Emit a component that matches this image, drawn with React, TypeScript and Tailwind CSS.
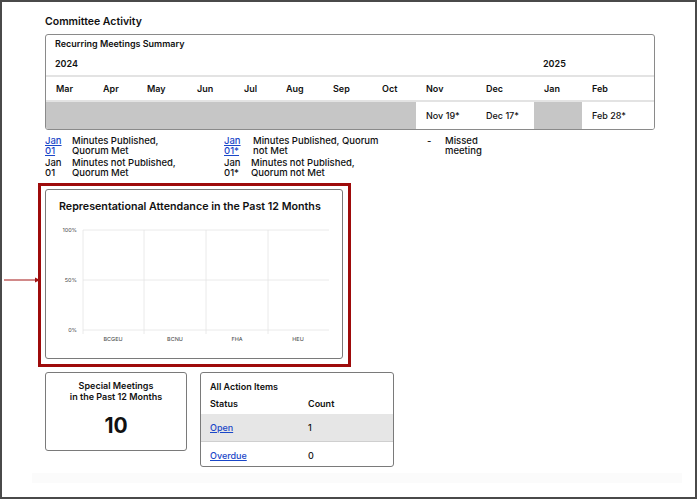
import React from 'react';

const months = [
  { name: 'Mar', cell: null },
  { name: 'Apr', cell: null },
  { name: 'May', cell: null },
  { name: 'Jun', cell: null },
  { name: 'Jul', cell: null },
  { name: 'Aug', cell: null },
  { name: 'Sep', cell: null },
  { name: 'Oct', cell: null },
  { name: 'Nov', cell: 'Nov 19*' },
  { name: 'Dec', cell: 'Dec 17*' },
  { name: 'Jan', cell: null },
  { name: 'Feb', cell: 'Feb 28*' },
];

const cols = 'grid grid-cols-[47px_44px_50px_47px_42px_47px_49px_44px_60px_58px_48px_72px]';

const AttendanceChart = () => {
  const xs = [37, 98, 160, 222];
  const ys = [8, 58, 108];
  const labels = ['100%', '50%', '0%'];
  const cats = [
    { name: 'BCGEU', x: 67 },
    { name: 'BCNU', x: 129 },
    { name: 'FHA', x: 191 },
    { name: 'HEU', x: 252 },
  ];
  return (
    <svg width="296" height="126" className="block" style={{ textRendering: 'geometricPrecision' }}>
      {ys.map((y) => (
        <line key={y} x1={37} x2={283} y1={y} y2={y} stroke="#e4e4e4" strokeWidth="0.8" />
      ))}
      {xs.map((x) => (
        <line key={x} x1={x} x2={x} y1={8} y2={112} stroke="#e4e4e4" strokeWidth="0.8" />
      ))}
      {labels.map((l, i) => (
        <text key={l} x={31} y={ys[i] + 2} textAnchor="end" fontSize="5.5" fill="#444">
          {l}
        </text>
      ))}
      {cats.map((c) => (
        <text key={c.name} x={c.x} y={119} textAnchor="middle" fontSize="5.5" fill="#444">
          {c.name}
        </text>
      ))}
    </svg>
  );
};

export default function App() {
  return (
    <div className="relative w-[697px] h-[499px] border-2 border-[#4a4a4a] bg-white pl-[43px] pt-[13px] font-['Inter','Noto_Sans',sans-serif] text-[#111]">
      {/* annotation arrow */}
      <svg className="absolute left-[1px] top-[274px]" width="38" height="8">
        <line x1="1" y1="4" x2="34" y2="4" stroke="#a31515" strokeWidth="1" />
        <path d="M32 1.5 L37 4 L32 6.5 Z" fill="#a31515" />
      </svg>

      <h2 className="text-[10.5px] font-semibold leading-[14px] mb-[5px]">Committee Activity</h2>

      {/* Recurring meetings */}
      <div className="w-[610px] border border-[#8a8a8a] rounded-[3px] overflow-hidden">
        <div className="h-[20px] pl-[9px] pt-[3px] text-[9px] font-semibold leading-[12px]">
          Recurring Meetings Summary
        </div>
        <div className={`${cols} h-[22px] items-center text-[9px] font-semibold border-b-2 border-[#e3e3e3]`}>
          <div className="col-span-10 pl-[9px] -mt-[2px]">2024</div>
          <div className="col-span-2 pl-[9px] -mt-[2px]">2025</div>
        </div>
        <div className={`${cols} h-[25px] items-center text-[9px] font-semibold border-b-2 border-[#e3e3e3]`}>
          {months.map((m) => (
            <div key={m.name} className="pl-[10px]">
              {m.name}
            </div>
          ))}
        </div>
        <div className={`${cols} h-[27px] text-[9px] font-medium`}>
          {months.map((m) =>
            m.cell ? (
              <div key={m.name} className="pl-[10px] flex items-center bg-white">
                {m.cell}
              </div>
            ) : (
              <div key={m.name} className="bg-[#c6c6c6]" />
            )
          )}
        </div>
      </div>

      {/* Legend */}
      <div className="grid grid-cols-[27px_152px_29px_174px_18px_60px] gap-y-[2px] mt-[6px] text-[9.5px] font-medium leading-[10px]">
        <a href="#" className="text-[#1a47c8] underline">Jan<br />01</a>
        <div>Minutes Published,<br />Quorum Met</div>
        <a href="#" className="text-[#1a47c8] underline">Jan<br />01*</a>
        <div>Minutes Published, Quorum<br />not Met</div>
        <div>-</div>
        <div>Missed<br />meeting</div>
        <div>Jan<br />01</div>
        <div>Minutes not Published,<br />Quorum Met</div>
        <div>Jan<br />01*</div>
        <div className="-ml-[2px]">Minutes not Published,<br />Quorum not Met</div>
        <div />
        <div />
      </div>

      {/* Highlighted chart */}
      <div className="-ml-[7px] mt-[5px] w-[313px] h-[184px] border-[3px] border-[#9e0b0b] pt-[3px] pl-[4px]">
        <div className="w-[298px] h-[170px] border border-[#7a7a7a] rounded-[3px]">
          <div className="h-[32px] pl-[13px] pt-[10px] text-[10.7px] font-semibold leading-[13px]">
            Representational Attendance in the Past 12 Months
          </div>
          <AttendanceChart />
        </div>
      </div>

      {/* Bottom cards */}
      <div className="flex items-start gap-[13px] mt-[5px]">
        <div className="w-[142px] h-[79px] border border-[#7a7a7a] rounded-[3px] flex flex-col items-center pt-[7px]">
          <div className="text-[9px] font-semibold leading-[11px] text-center">
            Special Meetings<br />in the Past 12 Months
          </div>
          <div className="text-[21px] font-bold leading-[24px] mt-[12px]">10</div>
        </div>
        <div className="w-[194px] h-[95px] border border-[#7a7a7a] rounded-[3px] overflow-hidden text-[9px]">
          <div className="pl-[9px] pt-[8px] font-semibold leading-[12px]">All Action Items</div>
          <div className="grid grid-cols-[98px_1fr] pl-[9px] h-[21px] items-center font-semibold">
            <div>Status</div>
            <div>Count</div>
          </div>
          <div className="grid grid-cols-[98px_1fr] pl-[9px] h-[28px] items-center bg-[#e6e6e6] border-b border-[#cfcfcf] font-medium">
            <a href="#" className="text-[#1a47c8] underline">Open</a>
            <div>1</div>
          </div>
          <div className="grid grid-cols-[98px_1fr] pl-[9px] h-[27px] items-center font-medium">
            <a href="#" className="text-[#1a47c8] underline">Overdue</a>
            <div>0</div>
          </div>
        </div>
      </div>

      <div className="absolute left-[30px] top-[471px] w-[650px] h-[10px] bg-[#fbfbfb]" />
    </div>
  );
}
